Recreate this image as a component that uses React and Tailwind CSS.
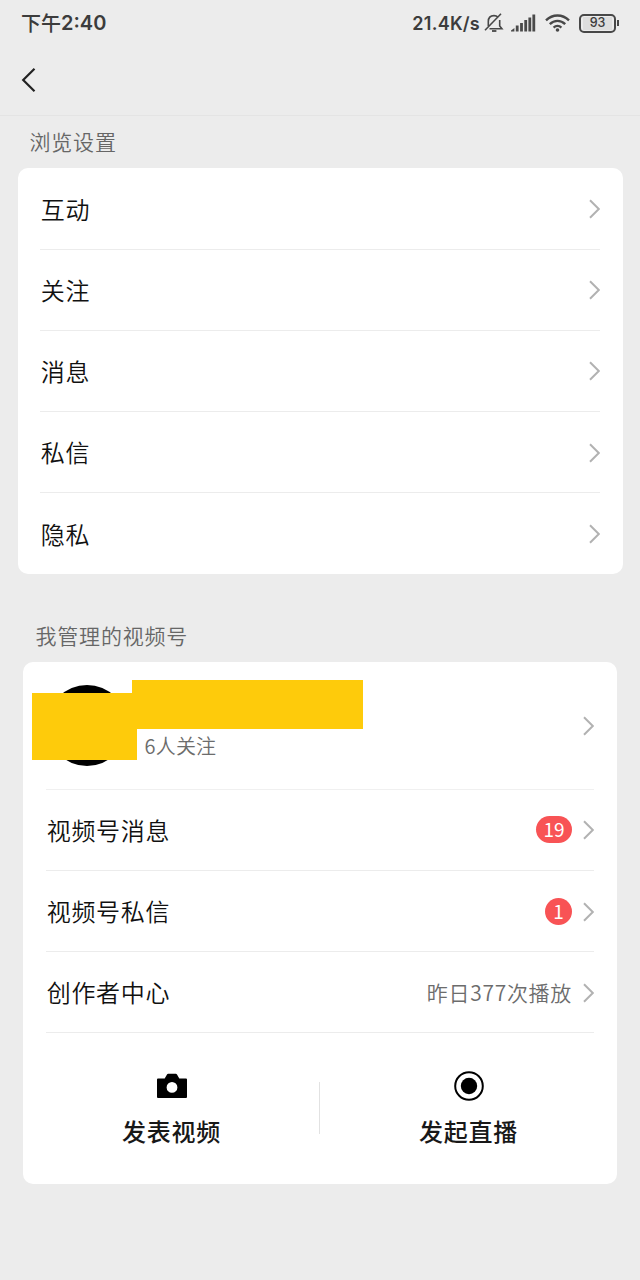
const browseSettings = ["互动", "关注", "消息", "私信", "隐私"];

const channelRows = [
  { label: "视频号消息", badge: "19" },
  { label: "视频号私信", badge: "1" },
  { label: "创作者中心", note: "昨日377次播放" },
];

function ChevronRight() {
  return (
    <svg className="mt-px h-5 w-3 shrink-0" viewBox="0 0 12 20" fill="none" stroke="#b2b2b2" strokeWidth="2">
      <path d="M2 1.2 10.8 10 2 18.8" />
    </svg>
  );
}

function MutedBell() {
  return (
    <svg className="h-5 w-5" viewBox="0 0 20 20" fill="none" stroke="#484848" strokeWidth="1.6">
      <path d="M4.3 13V8.6C4.3 5 6.5 2.6 10 2.6c1.6 0 3 .5 4 1.4M15.7 7v6l2.2 2.7H5.5" />
      <path d="M1 17.3 17 .8" />
      <path d="M8 18h4.4" strokeWidth="1.8" />
    </svg>
  );
}

function SignalBars() {
  return (
    <svg className="h-[18px] w-[25px]" viewBox="0 0 25 18" fill="#4a4a4a">
      <path d="M0 17.5v-1l3.4-2.6v3.6z" />
      <rect x="4.8" y="11.5" width="2.8" height="6" />
      <rect x="9.1" y="9" width="2.8" height="8.5" />
      <rect x="13.3" y="6" width="2.8" height="11.5" />
      <rect x="17.4" y="3.5" width="2.8" height="14" />
      <rect x="21.4" y="0.5" width="2.8" height="17" />
    </svg>
  );
}

function Wifi() {
  return (
    <svg className="h-[18px] w-[25px]" viewBox="0 0 25 18" fill="none" stroke="#484848" strokeWidth="2.4">
      <path d="M1 6.3C7.6-.2 17.4-.2 24 6.3" />
      <path d="M4.8 10.1c4.5-4.3 10.9-4.3 15.4 0" />
      <path d="M8.6 13.6c2.3-2.1 5.5-2.1 7.8 0" />
      <circle cx="12.5" cy="16" r="1.8" fill="#484848" stroke="none" />
    </svg>
  );
}

function Battery() {
  return (
    <div className="flex items-center">
      <div className="flex h-[19px] w-[37px] items-center justify-center rounded-[5px] border-2 border-[#484848]">
        <span className="flex h-[13px] w-[29px] items-center justify-center bg-[#dedede] pt-px font-['Inter',sans-serif] text-[12.5px] leading-none font-medium">
          93
        </span>
      </div>
      <div className="ml-px h-1.5 w-0.5 bg-[#484848]" />
    </div>
  );
}

function StatusBar() {
  return (
    <div className="flex h-[46px] items-center px-[21px] text-[#3c3c3c]">
      <div className="flex flex-1 items-center font-medium">
        <span className="text-[20px]">下午</span>
        <span className="font-['Inter',sans-serif] text-[20px] font-semibold">2:40</span>
      </div>
      <span className="mr-1 font-['Inter',sans-serif] text-[18px] font-semibold tracking-[0.25px]">21.4K/s</span>
      <MutedBell />
      <div className="ml-[7px] flex items-center gap-[9px]">
        <SignalBars />
        <Wifi />
        <Battery />
      </div>
    </div>
  );
}

function SectionLabel({ className, children }) {
  return (
    <h2 className={`flex h-[52px] items-center text-[21px] leading-none font-[350] tracking-[0.8px] text-[#666] ${className}`}>
      {children}
    </h2>
  );
}

function Row({ label, badge, note, last }) {
  return (
    <div className={`flex h-[81.2px] items-center border-[#ececec] pl-[0.7px] ${last ? "" : "border-b"}`}>
      <span className="flex-1 text-[24px] leading-none font-[350] tracking-[0.7px] text-[#111]">{label}</span>
      {badge && (
        <span className="mr-2.5 flex h-[27px] min-w-[27px] items-center justify-center rounded-full bg-[#f85355] px-[7.5px] text-[19px] leading-none text-white">
          <span className="-mt-0.5">{badge}</span>
        </span>
      )}
      {note && (
        <span className="mr-2.5 text-[21px] leading-none font-[350] tracking-[0.7px] text-[#6c6c6c]">{note}</span>
      )}
      <ChevronRight />
    </div>
  );
}

function ChannelHeader() {
  return (
    <div className="relative flex h-[127.8px] items-center border-b border-[#f0f0f0]">
      <div className="mt-px ml-px h-[81px] w-20 rounded-full bg-black" />
      <span className="mt-[41px] ml-[17.5px] flex-1 text-[20px] leading-none font-[350] tracking-[0.2px] text-[#6c6c6c]">
        6人关注
      </span>
      <ChevronRight />
      {/* redaction blocks over the avatar and the name */}
      <div className="absolute top-[31px] left-[-14px] h-[67px] w-[105px] bg-[#fecb0b]" />
      <div className="absolute top-[18px] left-[86px] h-[49px] w-[231px] bg-[#fecb0b]" />
    </div>
  );
}

function Action({ icon, label }) {
  return (
    <button type="button" className="flex flex-1 flex-col items-center">
      {icon}
      <span className="mt-[18.5px] text-[24px] leading-none font-medium tracking-[0.7px] text-[#181818]">{label}</span>
    </button>
  );
}

const cameraIcon = (
  <svg className="h-[30px] w-[30px]" viewBox="0 0 30 30">
    <path
      fillRule="evenodd"
      d="M7.7 7.5 10 3.4q.4-.7 1.200-.7h7.600q.8 0 1.200.7l2.300 4.100H29a1 1 0 0 1 1 1V26a1 1 0 0 1-1 1H1a1 1 0 0 1-1-1V8.500a1 1 0 0 1 1-1zM15 11a5.400 5.400 0 1 0 0 10.800A5.400 5.400 0 0 0 15 11z"
    />
  </svg>
);

const liveIcon = (
  <svg className="h-[30px] w-[30px]" viewBox="0 0 30 30">
    <circle cx="15" cy="15" r="13.8" fill="none" stroke="#000" strokeWidth="2" />
    <circle cx="15" cy="15" r="8.2" />
  </svg>
);

export default function App() {
  return (
    <div className="h-[1280px] w-[640px] overflow-hidden bg-[#ececec] font-['Noto_Sans_CJK_SC',sans-serif]">
      <StatusBar />
      <header className="flex h-[70px] items-center border-b border-[#e4e4e4] pb-0.5 pl-[21px]">
        <svg className="h-[26px] w-[15px]" viewBox="0 0 15 26" fill="none" stroke="#222" strokeWidth="2.2">
          <path d="M13.5 1.7 2.2 13l11.3 11.3" />
        </svg>
      </header>

      <SectionLabel className="pb-px pl-[29.5px]">浏览设置</SectionLabel>
      <section className="mx-[17.5px] rounded-[10px] bg-white px-[22.5px] pt-[0.5px]">
        {browseSettings.map((label, i) => (
          <Row key={label} label={label} last={i === browseSettings.length - 1} />
        ))}
      </section>

      <SectionLabel className="mt-[35.5px] pl-[35.5px]">我管理的视频号</SectionLabel>
      <section className="mx-[23px] h-[522px] rounded-[10px] bg-white px-[23px]">
        <ChannelHeader />
        {channelRows.map((row) => (
          <Row key={row.label} {...row} />
        ))}
        <div className="-mx-[23px] flex pt-[37.5px]">
          <Action icon={cameraIcon} label="发表视频" />
          <div className="mt-[11.5px] -mr-px h-[52px] w-px -translate-x-px bg-[#e2e2e2]" />
          <Action icon={liveIcon} label="发起直播" />
        </div>
      </section>
    </div>
  );
}
